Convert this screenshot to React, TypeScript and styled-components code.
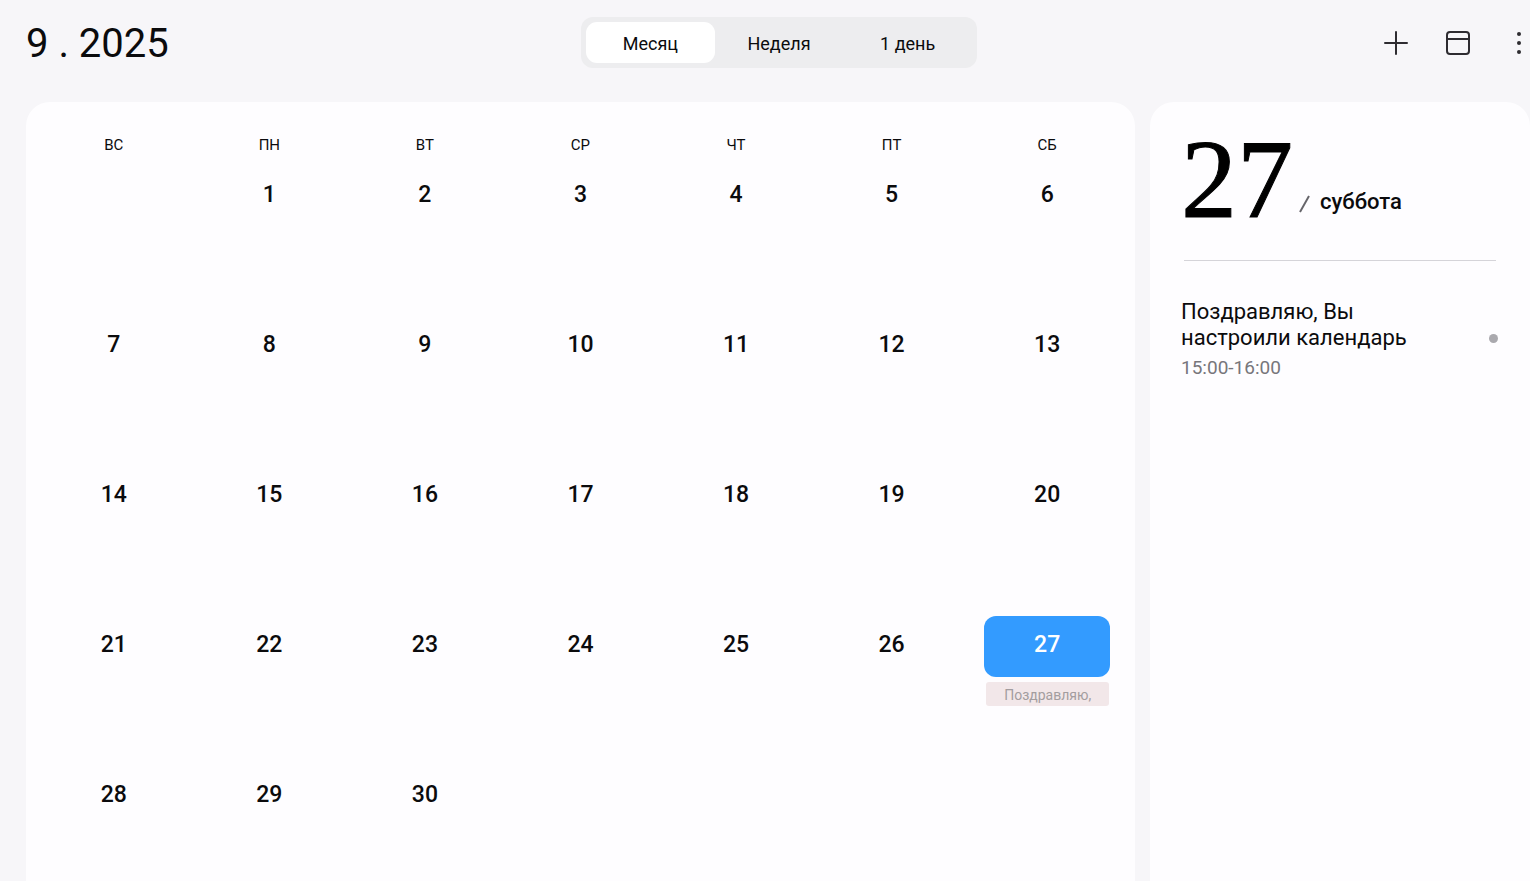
import React, { useState } from "react";
import styled, { createGlobalStyle } from "styled-components";

const GlobalStyle = createGlobalStyle`
  *, *::before, *::after { box-sizing: border-box; }
  body {
    margin: 0;
    background: #f7f6f9;
    color: #0b0b0d;
    font-family: Roboto, "Noto Sans", sans-serif;
  }
  button {
    border: 0;
    padding: 0;
    background: none;
    color: inherit;
    font: inherit;
    cursor: pointer;
  }
  h1, h2, h3, p { margin: 0; font-weight: 400; }
`;

const Shell = styled.div`
  display: flex;
  flex-direction: column;
  height: 100vh;
  overflow: hidden;
`;

const Header = styled.header`
  display: grid;
  grid-template-columns: 1fr auto 1fr;
  align-items: center;
  flex: none;
  height: 102px;
  padding: 0 0 17px 28px;
`;

const Title = styled.h1`
  margin-left: -2px;
  padding-top: 2px;
  font-size: 40px;
  line-height: 48px;
`;

const Segments = styled.div`
  display: grid;
  grid-template-columns: repeat(3, 1fr);
  width: 396px;
  padding: 5px;
  border-radius: 12px;
  background: #ededef;
`;

const Segment = styled.button<{ $active: boolean }>`
  height: 41px;
  padding-top: 2px;
  border-radius: 11px;
  background: ${(p) => (p.$active ? "#ffffff" : "transparent")};
  font-size: 18px;
  line-height: 24px;
`;

const Actions = styled.nav`
  display: flex;
  justify-content: flex-end;
  gap: 38px;
`;

const IconButton = styled.button<{ $width?: number }>`
  display: flex;
  justify-content: center;
  align-items: center;
  width: ${(p) => p.$width ?? 24}px;
  height: 26px;
`;

const Icon = styled.svg`
  display: block;
  flex: none;
  width: 26px;
  height: 26px;
  fill: none;
  stroke: #2e2c31;
  stroke-width: 2;
`;

const Content = styled.main`
  display: grid;
  grid-template-columns: 1fr 380px;
  gap: 15px;
  flex: 1;
  min-height: 0;
  padding-left: 26px;
`;

const Panel = styled.section`
  overflow: hidden;
  border-radius: 24px 24px 0 0;
  background: #fefdff;
`;

const MonthPanel = styled(Panel)`
  padding: 22px 10px 0;
`;

const MonthTable = styled.table`
  width: 100%;
  table-layout: fixed;
  border-collapse: collapse;
`;

const Weekday = styled.th`
  height: 42px;
  padding: 0;
  font-size: 15px;
  font-weight: 400;
  line-height: 42px;
  vertical-align: top;
`;

const DayCell = styled.td`
  height: 150px;
  padding: 0 15px;
  vertical-align: top;
`;

const DayButton = styled.button<{ $selected: boolean }>`
  display: block;
  width: 100%;
  height: 61px;
  padding-bottom: 4px;
  border-radius: 12px;
  background: ${(p) => (p.$selected ? "#339bff" : "transparent")};
  color: ${(p) => (p.$selected ? "#ffffff" : "inherit")};
  font-size: 23px;
  font-weight: 500;
  line-height: 28px;
`;

const EventChip = styled.p`
  height: 24px;
  margin: 5px 1px 0 2px;
  border-radius: 3px;
  background: #f2e7e9;
  color: #a39d9f;
  font-size: 14px;
  line-height: 26px;
  text-align: center;
  white-space: nowrap;
`;

const DayPanel = styled(Panel)`
  padding: 24px 31px 0;
`;

const DayHeading = styled.h2`
  display: flex;
  align-items: flex-end;
  height: 134px;
  padding: 3px 3px 31px;
`;

const BigNumber = styled.span`
  margin-left: -3px;
  font-family: "Liberation Serif", serif;
  font-size: 112px;
  line-height: 100px;
  color: #000000;
  -webkit-text-stroke: 1px #000000;
`;

const Slash = styled.svg`
  flex: none;
  width: 11px;
  height: 18px;
  margin: 0 10px 16px 6px;
  fill: none;
  stroke: #66656a;
  stroke-width: 2;
`;

const WeekdayName = styled.span`
  padding-bottom: 13px;
  font-size: 22px;
  font-weight: 500;
  line-height: 28px;
`;

const Divider = styled.hr`
  height: 1px;
  margin: 0 3px;
  border: 0;
  background: #d5d4d9;
`;

const EventItem = styled.article`
  display: flex;
  align-items: center;
  justify-content: space-between;
  padding: 38px 1px 0 0;
`;

const EventTitle = styled.h3`
  width: 250px;
  font-size: 22px;
  line-height: 26px;
`;

const EventTime = styled.p`
  padding-top: 4px;
  font-size: 19px;
  line-height: 26px;
  color: #77767b;
`;

const Dot = styled.span`
  width: 9px;
  height: 9px;
  margin-bottom: 4px;
  border-radius: 50%;
  background: #aaa9ae;
`;

const views = ["Месяц", "Неделя", "1 день"];
const weekdays = ["ВС", "ПН", "ВТ", "СР", "ЧТ", "ПТ", "СБ"];
const weekdayNames = ["воскресенье", "понедельник", "вторник", "среда", "четверг", "пятница", "суббота"];
const events: Record<number, { short: string; title: string; time: string }> = {
  27: { short: "Поздравляю,", title: "Поздравляю, Вы настроили календарь", time: "15:00-16:00" },
};

// September 2025 starts on a Monday, so the first Sunday slot is empty.
const weeks = Array.from({ length: 5 }, (_, w) =>
  Array.from({ length: 7 }, (_, d) => {
    const day = w * 7 + d;
    return day >= 1 && day <= 30 ? day : null;
  })
);

export default function App() {
  const [view, setView] = useState(0);
  const [selected, setSelected] = useState(27);
  const event = events[selected];

  return (
    <>
      <GlobalStyle />
      <Shell>
        <Header>
          <Title>9 . 2025</Title>
          <Segments role="group" aria-label="Вид календаря">
            {views.map((label, i) => (
              <Segment key={label} $active={i === view} aria-pressed={i === view} onClick={() => setView(i)}>
                {label}
              </Segment>
            ))}
          </Segments>
          <Actions>
            <IconButton aria-label="Добавить">
              <Icon viewBox="0 0 26 26" strokeLinecap="round">
                <path d="M13 2v22M2 13h22" />
              </Icon>
            </IconButton>
            <IconButton aria-label="Сегодня">
              <Icon viewBox="0 0 26 26">
                <rect x="2" y="2" width="22" height="22" rx="3" />
                <path d="M2 9h22" />
              </Icon>
            </IconButton>
            <IconButton aria-label="Ещё" $width={22}>
              <Icon viewBox="0 0 26 26">
                <g fill="#2e2c31" stroke="none">
                  <circle cx="13" cy="4" r="2" />
                  <circle cx="13" cy="13" r="2" />
                  <circle cx="13" cy="22" r="2" />
                </g>
              </Icon>
            </IconButton>
          </Actions>
        </Header>
        <Content>
          <MonthPanel>
            <MonthTable>
              <thead>
                <tr>
                  {weekdays.map((name) => (
                    <Weekday key={name} scope="col">{name}</Weekday>
                  ))}
                </tr>
              </thead>
              <tbody>
                {weeks.map((week, w) => (
                  <tr key={w}>
                    {week.map((day, d) => (
                      <DayCell key={d}>
                        {day && (
                          <DayButton $selected={day === selected} onClick={() => setSelected(day)}>
                            {day}
                          </DayButton>
                        )}
                        {day && events[day] && <EventChip>{events[day].short}</EventChip>}
                      </DayCell>
                    ))}
                  </tr>
                ))}
              </tbody>
            </MonthTable>
          </MonthPanel>
          <DayPanel>
            <DayHeading>
              <BigNumber>{selected}</BigNumber>
              <Slash viewBox="0 0 11 18" aria-hidden="true">
                <path d="M1 17L10 1" />
              </Slash>
              <WeekdayName>{weekdayNames[selected % 7]}</WeekdayName>
            </DayHeading>
            <Divider />
            {event && (
              <EventItem>
                <div>
                  <EventTitle>{event.title}</EventTitle>
                  <EventTime>{event.time}</EventTime>
                </div>
                <Dot />
              </EventItem>
            )}
          </DayPanel>
        </Content>
      </Shell>
    </>
  );
}
